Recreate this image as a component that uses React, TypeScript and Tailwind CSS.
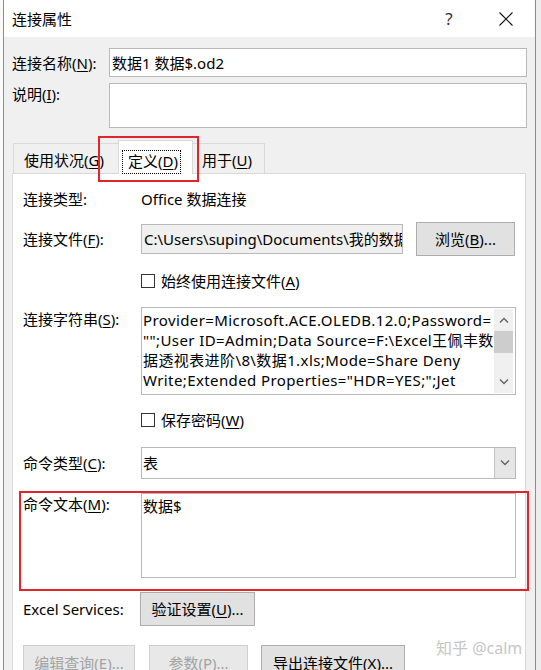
import React from "react";

function U({ children }: { children: React.ReactNode }) {
  return <span className="underline underline-offset-[2px] decoration-[1px]">{children}</span>;
}

function Checkbox({ children }: { children: React.ReactNode }) {
  return (
    <div className="flex items-center h-[20px]">
      <div className="w-[14px] h-[14px] border border-[#333333] bg-white shrink-0" />
      <div className="ml-[6px]">{children}</div>
    </div>
  );
}

function Chevron({ up }: { up?: boolean }) {
  return (
    <svg width="10" height="6" viewBox="0 0 10 6" className="block">
      <path
        d={up ? "M1 5.5 L5 1.5 L9 5.5" : "M1 0.5 L5 4.5 L9 0.5"}
        fill="none"
        stroke="#606060"
        strokeWidth="1.3"
      />
    </svg>
  );
}

export default function App() {
  return (
    <div className="relative w-[541px] h-[670px] overflow-hidden flex bg-[#f2f2f2] font-['Noto_Sans','Noto_Sans_CJK_SC',sans-serif] text-[15px] leading-[20px] text-black">
      <div className="w-[3px] h-full bg-[#fafafa]" />
      <div className="w-[533px] h-full flex flex-col bg-[#f0f0f0] border-x border-[#8c8c8c]">
        {/* Title bar */}
        <div className="h-[37px] bg-white flex items-center pl-[8px] shrink-0">
          <div>连接属性</div>
          <div className="ml-auto w-[30px] flex justify-center text-[17px] text-[#333]">?</div>
          <div className="ml-[27px] w-[30px] mr-[14px] flex justify-center">
            <svg width="16" height="16" viewBox="0 0 16 16">
              <path d="M1.5 1.5 L14.5 14.5 M14.5 1.5 L1.5 14.5" stroke="#111" strokeWidth="1.1" />
            </svg>
          </div>
        </div>

        <div className="px-[8px] flex flex-col flex-1">
          <div className="mt-[11px] flex h-[29px]">
            <div className="w-[97px] shrink-0 flex items-center">
              连接名称(<U>N</U>):
            </div>
            <div className="flex-1 border border-[#b9b9b9] bg-white flex items-center pl-[2px]">
              数据1 数据$.od2
            </div>
          </div>
          <div className="mt-[6px] flex h-[45px]">
            <div className="w-[97px] shrink-0 pt-[1px]">
              说明(<U>I</U>):
            </div>
            <div className="flex-1 border border-[#b9b9b9] bg-white" />
          </div>

          {/* Tabs */}
          <div className="mt-[12px] h-[33px] flex items-end shrink-0">
            <div className="ml-[1px] w-[106px] h-[30px] border border-b-0 border-[#d9d9d9] pl-[10px] pt-[6px]">
              使用状况(<U>G</U>)
            </div>
            <div className="relative z-10 ml-[-1px] w-[75px] h-[34px] -mb-px bg-white border border-b-0 border-[#d9d9d9] pl-[3px] pt-[9px]">
              <span className="inline-block border border-dotted border-black pl-[5px] pr-[2px] h-[24px] leading-[20px]">
                定义(<U>D</U>)
              </span>
            </div>
            <div className="ml-[-2px] w-[74px] h-[30px] border border-b-0 border-[#d9d9d9] pl-[10px] pt-[6px]">
              用于(<U>U</U>)
            </div>
          </div>

          {/* Panel */}
          <div className="mr-[1px] flex-1 bg-white border border-[#d9d9d9] pl-[10px] pr-[9px] flex flex-col">
            <div className="mt-[15px] h-[20px] flex">
              <div className="w-[118px] shrink-0">连接类型:</div>
              <div>Office 数据连接</div>
            </div>

            <div className="mt-[13px] h-[34px] flex items-center">
              <div className="w-[118px] shrink-0">
                连接文件(<U>F</U>):
              </div>
              <div className="w-[262px] shrink-0 h-[30px] border border-[#b9b9b9] bg-[#f0f0f0] flex items-center pl-[2px] overflow-hidden whitespace-nowrap">
                C:\Users\suping\Documents\我的数据源\数据1 数据$.odc
              </div>
              <div className="ml-[13px] w-[99px] shrink-0 h-[34px] bg-[#e1e1e1] border border-[#adadad] flex items-center justify-center">
                浏览(<U>B</U>)...
              </div>
            </div>

            <div className="mt-[15px] pl-[118px]">
              <Checkbox>
                始终使用连接文件(<U>A</U>)
              </Checkbox>
            </div>

            <div className="mt-[16px] h-[88px] flex">
              <div className="w-[118px] shrink-0 pt-[2px]">
                连接字符串(<U>S</U>):
              </div>
              <div className="flex-1 min-w-0 h-[88px] border border-[#b9b9b9] bg-white flex">
                <div className="flex-1 min-w-0 pl-[1px] pt-[2px] whitespace-nowrap overflow-hidden tracking-[0.4px]">
                  <div>Provider=Microsoft.ACE.OLEDB.12.0;Password=</div>
                  <div>"";User ID=Admin;Data Source=F:\Excel王佩丰数</div>
                  <div>据透视表进阶\8\数据1.xls;Mode=Share Deny</div>
                  <div>Write;Extended Properties="HDR=YES;";Jet</div>
                </div>
                <div className="w-[19px] shrink-0 my-[1px] mr-[2px] bg-[#f0f0f0] flex flex-col items-center">
                  <div className="h-[22px] flex items-center justify-center">
                    <Chevron up />
                  </div>
                  <div className="w-full h-[22px] bg-[#cdcdcd]" />
                  <div className="flex-1" />
                  <div className="h-[22px] flex items-center justify-center">
                    <Chevron />
                  </div>
                </div>
              </div>
            </div>

            <div className="mt-[15px] pl-[118px]">
              <Checkbox>
                保存密码(<U>W</U>)
              </Checkbox>
            </div>

            <div className="mt-[17px] h-[32px] flex items-center">
              <div className="w-[118px] shrink-0">
                命令类型(<U>C</U>):
              </div>
              <div className="flex-1 h-[32px] border border-[#b9b9b9] bg-white flex">
                <div className="flex-1 flex items-center pl-[1px]">表</div>
                <div className="w-[21px] bg-[#e6e6e6] border-l border-[#c4c4c4] flex items-center justify-center">
                  <Chevron />
                </div>
              </div>
            </div>

            <div className="mt-[14px] h-[85px] flex">
              <div className="w-[118px] shrink-0 pt-[1px]">
                命令文本(<U>M</U>):
              </div>
              <div className="flex-1 h-[85px] border border-[#b9b9b9] bg-white pl-[1px] pt-[2px]">数据$</div>
            </div>

            <div className="mt-[14px] h-[34px] flex items-center">
              <div className="w-[117px] shrink-0">Excel Services:</div>
              <div className="w-[115px] h-[34px] bg-[#e1e1e1] border border-[#adadad] flex items-center justify-center">
                验证设置(<U>U</U>)...
              </div>
            </div>

            <div className="mt-[19px] h-[35px] flex shrink-0">
              <div className="w-[112px] h-[35px] bg-[#e8e8e8] border border-[#cfcfcf] text-[#a3a3a3] flex items-center justify-center">
                编辑查询(E)...
              </div>
              <div className="ml-[14px] w-[99px] h-[35px] bg-[#e8e8e8] border border-[#cfcfcf] text-[#a3a3a3] flex items-center justify-center">
                参数(P)...
              </div>
              <div className="ml-[13px] w-[144px] h-[35px] bg-[#e1e1e1] border border-[#adadad] flex items-center justify-center">
                导出连接文件(<U>X</U>)...
              </div>
            </div>
          </div>
        </div>
      </div>
      <div className="flex-1 h-full bg-[#ededed]" />

      {/* red highlight boxes */}
      <div className="absolute left-[98px] top-[136px] w-[101px] h-[46px] border-2 border-[#e0262c]" />
      <div className="absolute left-[19px] top-[491px] w-[510px] h-[100px] border-2 border-[#e0262c]" />

      {/* watermark */}
      <div className="absolute left-[436px] top-[638px] text-[16px] text-[#c6c6c6] whitespace-nowrap">
        知乎 @calm
      </div>
    </div>
  );
}
